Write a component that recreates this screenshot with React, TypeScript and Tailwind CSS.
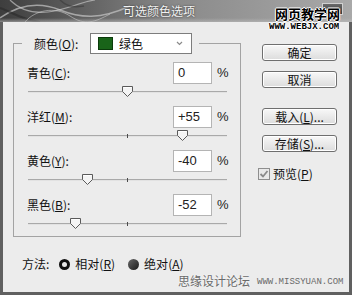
import React from 'react';

const cjk = "font-['Noto_Sans_CJK_SC','Noto_Sans',sans-serif]";
const latin = "font-['Liberation_Sans','Noto_Sans_CJK_SC',sans-serif]";
const mono = "font-['Liberation_Mono',monospace]";

interface Row {
  label: string;
  key: string;
  value: string;
  num: number;
}

const rows: Row[] = [
  { label: '青色', key: 'C', value: '0', num: 0 },
  { label: '洋红', key: 'M', value: '+55', num: 55 },
  { label: '黄色', key: 'Y', value: '-40', num: -40 },
  { label: '黑色', key: 'B', value: '-52', num: -52 },
];

const Mn = ({ k }: { k: string }) => (
  <>
    (<span className="underline underline-offset-1">{k}</span>)
  </>
);

const Thumb = () => (
  <svg width="11" height="11" viewBox="0 0 11 11">
    <polygon points="0.5,0.5 10.5,0.5 10.5,5.5 5.5,10.5 0.5,5.5" fill="#f4f4f4" stroke="#5a5a5a" />
    <polyline points="1.5,1.5 9.5,1.5" stroke="#ffffff" fill="none" />
  </svg>
);

const Slider = ({ num, last }: { num: number; last: boolean }) => {
  const left = 99.5 + num * 0.995 - 5.5;
  return (
    <div className={last ? 'h-[20px] pt-[7px]' : 'h-[22px] pt-[7px]'}>
      <div className="relative ml-[14px] w-[199px] h-[2px] border-t border-[#a9a9a9] bg-[#e2e2e2]">
        <div className="absolute left-[99px] top-[-2px] w-px h-[4px] bg-[#4a4a4a]" />
        <div className="absolute top-[-6px]" style={{ left }}>
          <Thumb />
        </div>
      </div>
    </div>
  );
};

const Button = ({ children, className = '' }: { children: React.ReactNode; className?: string }) => (
  <div
    className={`h-[17px] flex items-center justify-center rounded-[3px] border border-[#6f6f6f] bg-gradient-to-b from-[#f8f8f8] to-[#dcdcdc] text-[12px] leading-none text-[#111] shadow-[inset_0_0_0_1px_#ffffff] ${className}`}
  >
    {children}
  </div>
);

export default function App() {
  return (
    <div className={`w-[352px] h-[295px] flex flex-col overflow-hidden relative bg-[#ececec] ${cjk}`}>
      {/* 标题栏 */}
      <div className="h-[22px] relative flex items-center bg-gradient-to-r from-[#3e3e3e] via-[#8a8a8a] to-[#a9a9a9]">
        <svg className="absolute left-0 top-0" width="140" height="22" viewBox="0 0 140 22">
          <path d="M0 18 C20 4, 40 2, 60 10 S100 20, 130 6" stroke="#c8c8c8" strokeWidth="1.5" fill="none" opacity="0.7" />
          <path d="M10 0 C18 8, 30 14, 48 12 S80 2, 95 0" stroke="#d6d6d6" strokeWidth="1.2" fill="none" opacity="0.6" />
          <path d="M0 8 C12 12, 22 20, 40 22" stroke="#2a2a2a" strokeWidth="2" fill="none" opacity="0.6" />
          <path d="M25 22 C35 10, 55 6, 70 16 S95 22, 110 14" stroke="#e0e0e0" strokeWidth="1" fill="none" opacity="0.5" />
          <path d="M60 0 C66 6, 72 8, 84 6" stroke="#333" strokeWidth="1.5" fill="none" opacity="0.5" />
        </svg>
        <div className="absolute left-0 right-0 bottom-0 h-[4px] bg-gradient-to-b from-transparent to-[#bdbdbd]/60" />
        <span className="relative pl-[123px] text-[12px] leading-none text-[#f2f2f2] [text-shadow:0_0_2px_#2a2a2a]">
          可选颜色选项
        </span>
        <div className="absolute left-[322px] top-[3px] w-[21px] h-[12px] border border-[#d0d0d0] bg-gradient-to-b from-[#6a6a6a] to-[#3a3a3a]" />
      </div>

      {/* 窗体 */}
      <div className="flex-1 flex flex-col border-x-[3px] border-b-[3px] border-[#606060] pl-[10px] pt-[11px]">
        <div className="flex">
          <fieldset className="w-[228px] border border-[#a3a3a3] p-0 m-0 min-w-0">
            <legend className="ml-[8px] pl-[12px] pr-[7px] p-0">
              <div className="flex items-center h-[21px]">
                <span className="w-[56px] text-[12px] leading-none text-[#111]">
                  颜色<Mn k="O" />:
                </span>
                <div className="w-[102px] h-[21px] flex items-center border border-[#7d7d7d] bg-white pl-[7px]">
                  <div className="w-[15px] h-[13px] bg-[#196419] border border-[#0b3a0b]" />
                  <span className="ml-[6px] text-[12px] leading-none text-[#111]">绿色</span>
                  <svg className="ml-auto mr-[8px]" width="7" height="5" viewBox="0 0 7 5">
                    <path d="M1 1 L3.5 3.5 L6 1" stroke="#8a8a8a" strokeWidth="1.2" fill="none" />
                  </svg>
                </div>
              </div>
            </legend>
            <div className="mt-[8px] flex flex-col">
              {rows.map((r, i) => (
                <div key={r.key} className="flex flex-col">
                  <div className="h-[22px] flex items-center">
                    <span className="w-[159px] pl-[13px] text-[12px] leading-none text-[#111]">
                      {r.label}
                      <Mn k={r.key} />:
                    </span>
                    <div className={`w-[39px] h-[22px] flex items-center border border-[#b4b4b4] bg-white pl-[4px] text-[13px] text-[#222] ${latin}`}>
                      {r.value}
                    </div>
                    <span className={`ml-[5px] text-[13px] text-[#222] ${latin}`}>%</span>
                  </div>
                  <Slider num={r.num} last={i === rows.length - 1} />
                </div>
              ))}
            </div>
          </fieldset>

          {/* 按钮 */}
          <div className="ml-[21px] w-[75px] pt-[11px] flex flex-col">
            <Button>确定</Button>
            <Button className="mt-[10px]">取消</Button>
            <Button className="mt-[20px]">
              载入<Mn k="L" />...
            </Button>
            <Button className="mt-[10px]">
              存储<Mn k="S" />...
            </Button>
            <div className="mt-[16px] -ml-[4px] flex items-center">
              <div className="w-[12px] h-[12px] border border-[#8e8e8e] bg-[#e9e9e9] flex items-center justify-center">
                <svg width="10" height="10" viewBox="0 0 10 10">
                  <path d="M1.5 5 L4 7.5 L8.5 2" stroke="#8a8a8a" strokeWidth="1.8" fill="none" />
                </svg>
              </div>
              <span className="ml-[3px] text-[12px] leading-none text-[#111]">
                预览<Mn k="P" />
              </span>
            </div>
          </div>
        </div>

        {/* 方法 */}
        <div className="mt-[20px] ml-[9px] h-[14px] flex items-center text-[12px] leading-none text-[#111]">
          <span>方法:</span>
          <div className="ml-[10px] w-[11px] h-[11px] rounded-full bg-[#111] flex items-center justify-center">
            <div className="w-[5px] h-[5px] rounded-full bg-[#e8e8e8]" />
          </div>
          <span className="ml-[5px]">
            相对<Mn k="R" />
          </span>
          <div className="ml-[13px] w-[11px] h-[11px] rounded-full bg-gradient-to-br from-[#6a6a6a] to-[#1a1a1a]" />
          <span className="ml-[5px]">
            绝对<Mn k="A" />
          </span>
        </div>
      </div>

      {/* 水印 */}
      <div className="absolute left-[275px] top-[7px] flex flex-col items-center">
        <span className="text-[13px] leading-none font-bold text-black [text-shadow:1px_0_0_#fff,-1px_0_0_#fff,0_1px_0_#fff,0_-1px_0_#fff]">
          网页教学网
        </span>
      </div>
      <span className={`absolute left-[269px] top-[23px] text-[9px] leading-none font-bold text-black ${mono} [text-shadow:1px_0_0_#fff,-1px_0_0_#fff,0_1px_0_#fff,0_-1px_0_#fff]`}>
        WWW.WEBJX.COM
      </span>
      <div className="absolute left-[178px] top-[275px] flex items-end">
        <span className="text-[12px] leading-none text-[#6a6a6a] [text-shadow:0_0_2px_#fff]">思缘设计论坛</span>
        <span className={`ml-[7px] text-[9px] leading-none text-[#6a6a6a] ${mono}`}>WWW.MISSYUAN.COM</span>
      </div>
    </div>
  );
}
